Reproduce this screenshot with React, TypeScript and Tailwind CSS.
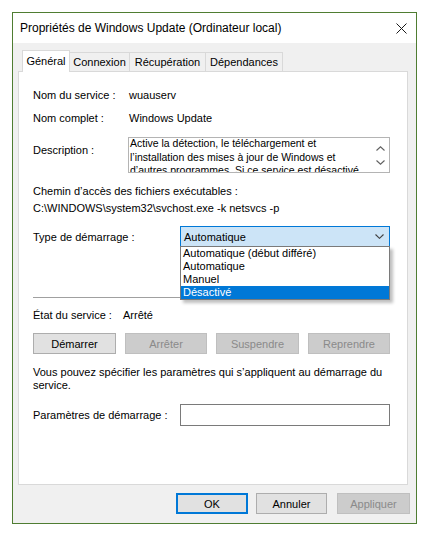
import React from "react";

function Btn({
  label,
  w,
  disabled,
  def,
}: {
  label: string;
  w: string;
  disabled?: boolean;
  def?: boolean;
}) {
  const base = "h-[21px] flex items-center justify-center text-[11px] box-border";
  if (disabled) {
    return (
      <div className={`${base} ${w} bg-[#cccccc] border border-[#bfbfbf] text-[#8a8a8a]`}>{label}</div>
    );
  }
  if (def) {
    return (
      <div className={`${base} ${w} bg-[#e1e1e1] border-2 border-[#0078d7] text-black`}>{label}</div>
    );
  }
  return (
    <div className={`${base} ${w} bg-[#e1e1e1] border border-[#adadad] text-black`}>{label}</div>
  );
}

function Chevron({ up }: { up?: boolean }) {
  return (
    <svg width="9" height="5" viewBox="0 0 9 5" className="block">
      {up ? (
        <path d="M0.5 4.5 L4.5 0.8 L8.5 4.5" fill="none" stroke="#606060" strokeWidth="1.1" />
      ) : (
        <path d="M0.5 0.5 L4.5 4.2 L8.5 0.5" fill="none" stroke="#606060" strokeWidth="1.1" />
      )}
    </svg>
  );
}

export default function App() {
  return (
    <div className="w-[425px] h-[536px] bg-white pt-[12px] pl-[12px] font-['Liberation_Sans',Arial,sans-serif] text-[11px] text-black leading-[14px]">
      <div className="w-[405px] h-[512px] border border-[#4f7d32] bg-[#f0f0f0] flex flex-col">
        {/* Title bar */}
        <div className="h-[30px] bg-white flex items-center justify-between pl-[7px] pr-[9px] shrink-0">
          <span className="text-[12px] text-black">Propriétés de Windows Update (Ordinateur local)</span>
          <svg width="11" height="11" viewBox="0 0 11 11" className="block">
            <path d="M0.5 0.5 L10.5 10.5 M10.5 0.5 L0.5 10.5" stroke="#1a1a1a" strokeWidth="1" />
          </svg>
        </div>

        {/* Body */}
        <div className="flex-1 flex flex-col pl-[5px] pr-[8px] pt-[7px]">
          {/* Tabs */}
          <div className="flex items-end h-[21px] ml-[4px]">
            <div className="relative z-10 w-[48px] h-[22px] -mb-px bg-white border-l border-t border-r border-[#d9d9d9] flex items-start justify-center pt-[3px]">
              Général
            </div>
            <div className="w-[60px] h-[19px] bg-[#f0f0f0] border-t border-r border-[#d9d9d9] flex items-center justify-center">
              Connexion
            </div>
            <div className="w-[76px] h-[19px] bg-[#f0f0f0] border-t border-r border-[#d9d9d9] flex items-center justify-center">
              Récupération
            </div>
            <div className="w-[77px] h-[19px] bg-[#f0f0f0] border-t border-r border-[#d9d9d9] flex items-center justify-center">
              Dépendances
            </div>
          </div>

          {/* Panel */}
          <div className="h-[414px] bg-white border border-[#d9d9d9] flex flex-col pl-[14px] pr-[17px]">
            <div className="flex h-[14px] mt-[16px] items-center">
              <div className="w-[96px]">Nom du service :</div>
              <div>wuauserv</div>
            </div>
            <div className="flex h-[14px] mt-[9px] items-center">
              <div className="w-[96px]">Nom complet :</div>
              <div>Windows Update</div>
            </div>
            <div className="flex mt-[12px] items-start">
              <div className="w-[95px] mt-[6px]">Description :</div>
              <div className="flex-1 h-[36px] border border-[#b4b4b4] flex overflow-hidden">
                <div className="flex-1 overflow-hidden pl-[1px] -mt-[1px] text-[10.5px] leading-[13.5px] whitespace-nowrap">
                  <div>Active la détection, le téléchargement et</div>
                  <div>l’installation des mises à jour de Windows et</div>
                  <div>d’autres programmes. Si ce service est désactivé</div>
                </div>
                <div className="w-[17px] flex flex-col items-center justify-between pt-[8px] pb-[7px]">
                  <Chevron up />
                  <Chevron />
                </div>
              </div>
            </div>
            <div className="mt-[10px] leading-[17px]">
              <div>Chemin d’accès des fichiers exécutables :</div>
              <div>C:\WINDOWS\system32\svchost.exe -k netsvcs -p</div>
            </div>
            <div className="flex mt-[9px] items-center">
              <div className="w-[147px]">Type de démarrage :</div>
              <div className="relative flex-1">
                <div className="h-[21px] bg-[#cce4f7] border border-[#0078d7] flex items-center justify-between pl-[3px] pr-[5px]">
                  <span>Automatique</span>
                  <svg width="9" height="5" viewBox="0 0 9 5" className="block">
                    <path d="M0.5 0.5 L4.5 4.3 L8.5 0.5" fill="none" stroke="#404040" strokeWidth="1.1" />
                  </svg>
                </div>
                <div className="absolute left-0 right-0 top-[20px] z-20 bg-white border border-[#7a7a7a] shadow-[3px_3px_3px_rgba(0,0,0,0.25)] leading-[13px]">
                  <div className="h-[13px] pl-[2px]">Automatique (début différé)</div>
                  <div className="h-[13px] pl-[2px]">Automatique</div>
                  <div className="h-[13px] pl-[2px]">Manuel</div>
                  <div className="h-[13px] pl-[2px] bg-[#0078d7] text-white">Désactivé</div>
                </div>
              </div>
            </div>
            <div className="mt-[50px] h-px bg-[#a0a0a0]" />
            <div className="flex h-[14px] mt-[10px] items-center">
              <div className="w-[90px]">État du service :</div>
              <div>Arrêté</div>
            </div>
            <div className="flex justify-between mt-[11px]">
              <Btn label="Démarrer" w="w-[83px]" />
              <Btn label="Arrêter" w="w-[82px]" disabled />
              <Btn label="Suspendre" w="w-[83px]" disabled />
              <Btn label="Reprendre" w="w-[82px]" disabled />
            </div>
            <div className="mt-[12px] leading-[13px] whitespace-nowrap">
              <div>Vous pouvez spécifier les paramètres qui s’appliquent au démarrage du</div>
              <div>service.</div>
            </div>
            <div className="flex mt-[12px] items-center">
              <div className="w-[147px]">Paramètres de démarrage :</div>
              <div className="flex-1 h-[22px] border border-[#7a7a7a] bg-white" />
            </div>
          </div>

          {/* Bottom buttons */}
          <div className="flex justify-end mt-[8px] -mr-[2px] gap-[8px]">
            <Btn label="OK" w="w-[72px]" def />
            <div className="w-[71px]">
              <Btn label="Annuler" w="w-[71px]" />
            </div>
            <div className="ml-[2px]">
              <Btn label="Appliquer" w="w-[73px]" disabled />
            </div>
          </div>
        </div>
      </div>
    </div>
  );
}
